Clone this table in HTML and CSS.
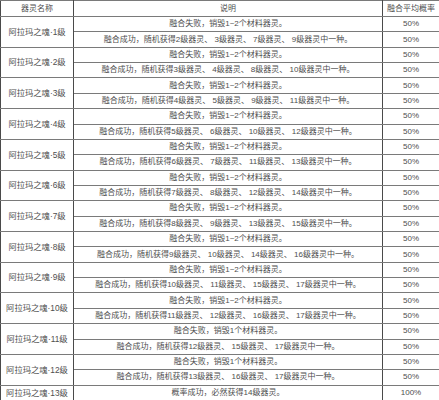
FILE: index.html
```html
<!DOCTYPE html>
<html lang="zh">
<head>
<meta charset="utf-8">
<link rel="stylesheet" href="styles.css">
</head>
<body>
<table class="grid">
  <colgroup><col class="c1"><col class="c2"><col class="c3"></colgroup>
  <thead>
    <tr class="head"><th>器灵名称</th><th>说明</th><th>融合平均概率</th></tr>
  </thead>
  <tbody>
    <tr><td rowspan="2" class="name">阿拉玛之魂·1级</td><td>融合失败，销毁1~2个材料器灵。</td><td>50%</td></tr>
    <tr><td>融合成功，随机获得2级器灵、 3级器灵、 7级器灵、 9级器灵中一种。</td><td>50%</td></tr>
    <tr><td rowspan="2" class="name">阿拉玛之魂·2级</td><td>融合失败，销毁1~2个材料器灵。</td><td>50%</td></tr>
    <tr><td>融合成功，随机获得3级器灵、 4级器灵、 8级器灵、 10级器灵中一种。</td><td>50%</td></tr>
    <tr><td rowspan="2" class="name">阿拉玛之魂·3级</td><td>融合失败，销毁1~2个材料器灵。</td><td>50%</td></tr>
    <tr><td>融合成功，随机获得4级器灵、 5级器灵、 9级器灵、 11级器灵中一种。</td><td>50%</td></tr>
    <tr><td rowspan="2" class="name">阿拉玛之魂·4级</td><td>融合失败，销毁1~2个材料器灵。</td><td>50%</td></tr>
    <tr><td>融合成功，随机获得5级器灵、 6级器灵、 10级器灵、 12级器灵中一种。</td><td>50%</td></tr>
    <tr><td rowspan="2" class="name">阿拉玛之魂·5级</td><td>融合失败，销毁1~2个材料器灵。</td><td>50%</td></tr>
    <tr><td>融合成功，随机获得6级器灵、 7级器灵、 11级器灵、 13级器灵中一种。</td><td>50%</td></tr>
    <tr><td rowspan="2" class="name">阿拉玛之魂·6级</td><td>融合失败，销毁1~2个材料器灵。</td><td>50%</td></tr>
    <tr><td>融合成功，随机获得7级器灵、 8级器灵、 12级器灵、 14级器灵中一种。</td><td>50%</td></tr>
    <tr><td rowspan="2" class="name">阿拉玛之魂·7级</td><td>融合失败，销毁1~2个材料器灵。</td><td>50%</td></tr>
    <tr><td>融合成功，随机获得8级器灵、 9级器灵、 13级器灵、 15级器灵中一种。</td><td>50%</td></tr>
    <tr><td rowspan="2" class="name">阿拉玛之魂·8级</td><td>融合失败，销毁1~2个材料器灵。</td><td>50%</td></tr>
    <tr><td>融合成功，随机获得9级器灵、 10级器灵、 14级器灵、 16级器灵中一种。</td><td>50%</td></tr>
    <tr><td rowspan="2" class="name">阿拉玛之魂·9级</td><td>融合失败，销毁1~2个材料器灵。</td><td>50%</td></tr>
    <tr><td>融合成功，随机获得10级器灵、 11级器灵、 15级器灵、 17级器灵中一种。</td><td>50%</td></tr>
    <tr><td rowspan="2" class="name">阿拉玛之魂·10级</td><td>融合失败，销毁1~2个材料器灵。</td><td>50%</td></tr>
    <tr><td>融合成功，随机获得11级器灵、 12级器灵、 16级器灵、 17级器灵中一种。</td><td>50%</td></tr>
    <tr><td rowspan="2" class="name">阿拉玛之魂·11级</td><td>融合失败，销毁1个材料器灵。</td><td>50%</td></tr>
    <tr><td>融合成功，随机获得12级器灵、 15级器灵、 17级器灵中一种。</td><td>50%</td></tr>
    <tr><td rowspan="2" class="name">阿拉玛之魂·12级</td><td>融合失败，销毁1个材料器灵。</td><td>50%</td></tr>
    <tr><td>融合成功，随机获得13级器灵、 16级器灵、 17级器灵中一种。</td><td>50%</td></tr>
    <tr class="last"><td class="name">阿拉玛之魂·13级</td><td>概率成功，必然获得14级器灵。</td><td>100%</td></tr>
  </tbody>
</table>
</body>
</html>
```
FILE: styles.css
```css
html, body {
  margin: 0;
  padding: 0;
  background: #ffffff;
}

.grid {
  width: 439px;
  height: 400px;
  table-layout: fixed;
  border-collapse: collapse;
  font-family: "Liberation Sans", "Noto Sans CJK SC", sans-serif;
  font-size: 8px;
  color: #4e4e4e;
}

.c1 { width: 73px; }
.c2 { width: 309px; }
.c3 { width: 57px; }

.grid th,
.grid td {
  padding: 0;
  text-align: center;
  vertical-align: middle;
  font-weight: normal;
  white-space: nowrap;
  line-height: 1;
  border-top: 1px solid #7a7a7a;
  border-bottom: 1px solid #7a7a7a;
  border-left: 1px solid #4a4a4a;
  border-right: 1px solid #4a4a4a;
}

.grid tr {
  height: 15.36px;
}

.grid .head {
  height: 16px;
}

.grid .name {
  font-size: 8.3px;
}
```
